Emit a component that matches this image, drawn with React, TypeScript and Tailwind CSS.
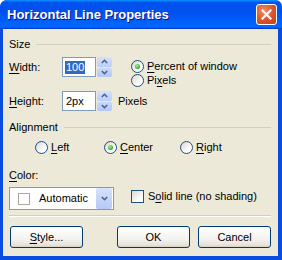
import React from 'react';

function U({ children }: { children: React.ReactNode }) {
  return <span className="underline underline-offset-[2px] decoration-1">{children}</span>;
}

function Radio({ checked }: { checked?: boolean }) {
  return (
    <span className="w-[13px] h-[13px] rounded-full border border-[#1c5180] bg-[linear-gradient(135deg,#d8d5cc,#ffffff_70%)] flex items-center justify-center shrink-0">
      {checked && (
        <span className="w-[5px] h-[5px] rounded-full bg-[radial-gradient(circle_at_40%_35%,#a8f0a0,#21a121_80%)]" />
      )}
    </span>
  );
}

function Arrow({ up }: { up?: boolean }) {
  return (
    <svg width="7" height="5" viewBox="0 0 7 5">
      <polyline
        points={up ? '0.8,4 3.5,1.3 6.2,4' : '0.8,1 3.5,3.7 6.2,1'}
        fill="none"
        stroke="#4d6185"
        strokeWidth="1.6"
      />
    </svg>
  );
}

function Spinner() {
  return (
    <div className="ml-[1px] w-[15px] h-[20px] flex flex-col gap-px">
      <div className="flex-1 rounded-[2px] bg-[linear-gradient(180deg,#d6e2fc,#b9cdf8)] flex items-center justify-center">
        <Arrow up />
      </div>
      <div className="flex-1 rounded-[2px] bg-[linear-gradient(180deg,#c9d8fb,#b2c7f6)] flex items-center justify-center">
        <Arrow />
      </div>
    </div>
  );
}

function GroupHeader({ label }: { label: string }) {
  return (
    <div className="flex items-center h-[13px] gap-[6px]">
      <span>{label}</span>
      <div className="flex-1 h-[2px] border-t border-[#d0d0bf] border-b-white mt-px" />
    </div>
  );
}

function XpButton({ children, className }: { children: React.ReactNode; className?: string }) {
  return (
    <div
      className={
        'w-[73px] h-[22px] rounded-[3px] border border-[#003c74] bg-[linear-gradient(180deg,#ffffff,#f3f2ee_60%,#e6e3da_90%,#d6d0c5)] flex items-center justify-center ' +
        (className ?? '')
      }
    >
      {children}
    </div>
  );
}

export default function App() {
  return (
    <div className="w-[282px] h-[260px] bg-white font-['Liberation_Sans',Arial,sans-serif] text-[11px] leading-[13px] text-black">
      <div className="w-full h-full rounded-t-[7px] overflow-hidden bg-[#0a4ce0] flex flex-col">
        <div className="h-[29px] shrink-0 bg-[linear-gradient(180deg,#0997ff,#0053ee_8%,#0050ee_40%,#0066ff_88%,#0066ff_93%,#005bff_95%,#003dd7_96%,#003dd7)] flex items-center pl-[7px] pr-[5px]">
          <span className="flex-1 text-white font-bold text-[13px] leading-[16px] mt-[1px] [text-shadow:1px_1px_0_#0f1089]">
            Horizontal Line Properties
          </span>
          <div className="w-[21px] h-[21px] rounded-[3px] border border-white bg-[radial-gradient(circle_at_35%_30%,#f08a66,#d8532c_55%,#c2401a)] flex items-center justify-center">
            <svg width="11" height="11" viewBox="0 0 11 11">
              <path d="M1.5 1.5 L9.5 9.5 M9.5 1.5 L1.5 9.5" stroke="white" strokeWidth="2.2" strokeLinecap="square" />
            </svg>
          </div>
        </div>

        <div className="flex-1 ml-[3px] mr-[4px] mb-[4px] bg-[#ece9d8] pl-[6px] pr-[7px] pt-[9px] flex flex-col">
          <GroupHeader label="Size" />

          <div className="flex items-start mt-[6px]">
            <div className="flex items-center">
              <span className="w-[53px]">
                <U>W</U>idth:
              </span>
              <div className="w-[34px] h-[20px] border border-[#7f9db9] bg-white flex items-center pl-[2px]">
                <span className="bg-[#316ac5] text-white px-px">100</span>
              </div>
              <Spinner />
            </div>
            <div className="ml-[19px] mt-[3px] flex flex-col gap-px">
              <div className="flex items-center gap-[3px] h-[13px]">
                <Radio checked />
                <span>
                  <U>P</U>ercent of window
                </span>
              </div>
              <div className="flex items-center gap-[3px] h-[13px]">
                <Radio />
                <span>
                  Pi<U>x</U>els
                </span>
              </div>
            </div>
          </div>

          <div className="flex items-center mt-[4px]">
            <span className="w-[53px]">
              <U>H</U>eight:
            </span>
            <div className="w-[34px] h-[20px] border border-[#7f9db9] bg-white flex items-center pl-[3px]">
              2px
            </div>
            <Spinner />
            <span className="ml-[6px]">Pixels</span>
          </div>

          <div className="mt-[10px]">
            <GroupHeader label="Alignment" />
          </div>

          <div className="flex items-center mt-[7px] pl-[26px] h-[13px]">
            <div className="w-[69px] flex items-center gap-[3px]">
              <Radio />
              <span>
                <U>L</U>eft
              </span>
            </div>
            <div className="w-[76px] flex items-center gap-[3px]">
              <Radio checked />
              <span>
                <U>C</U>enter
              </span>
            </div>
            <div className="flex items-center gap-[3px]">
              <Radio />
              <span>
                <U>R</U>ight
              </span>
            </div>
          </div>

          <div className="mt-[15px] h-[13px]">
            <U>C</U>olor:
          </div>

          <div className="flex items-center mt-[5px]">
            <div className="w-[105px] h-[23px] border border-[#7f9db9] bg-white flex items-center pl-[8px] pr-px">
              <span className="w-[12px] h-[12px] border border-[#aca899]" />
              <span className="ml-[9px] flex-1">Automatic</span>
              <div className="w-[16px] h-[21px] rounded-[2px] bg-[linear-gradient(180deg,#d6e2fc,#b4c9f7)] flex items-center justify-center">
                <Arrow />
              </div>
            </div>
            <div className="ml-[17px] flex items-center gap-[4px] -mt-[5px]">
              <span className="w-[13px] h-[13px] border border-[#1c5180] bg-[linear-gradient(135deg,#dcdad5,#ffffff_75%)]" />
              <span>
                S<U>o</U>lid line (no shading)
              </span>
            </div>
          </div>

          <div className="mt-[5px] h-[2px] border-t border-[#d0d0bf] border-b border-b-white" />

          <div className="flex items-center mt-[9px] pl-[1px]">
            <XpButton>
              <span>
                <U>S</U>tyle...
              </span>
            </XpButton>
            <XpButton className="ml-[34px]">OK</XpButton>
            <XpButton className="ml-[8px]">Cancel</XpButton>
          </div>
        </div>
      </div>
    </div>
  );
}
